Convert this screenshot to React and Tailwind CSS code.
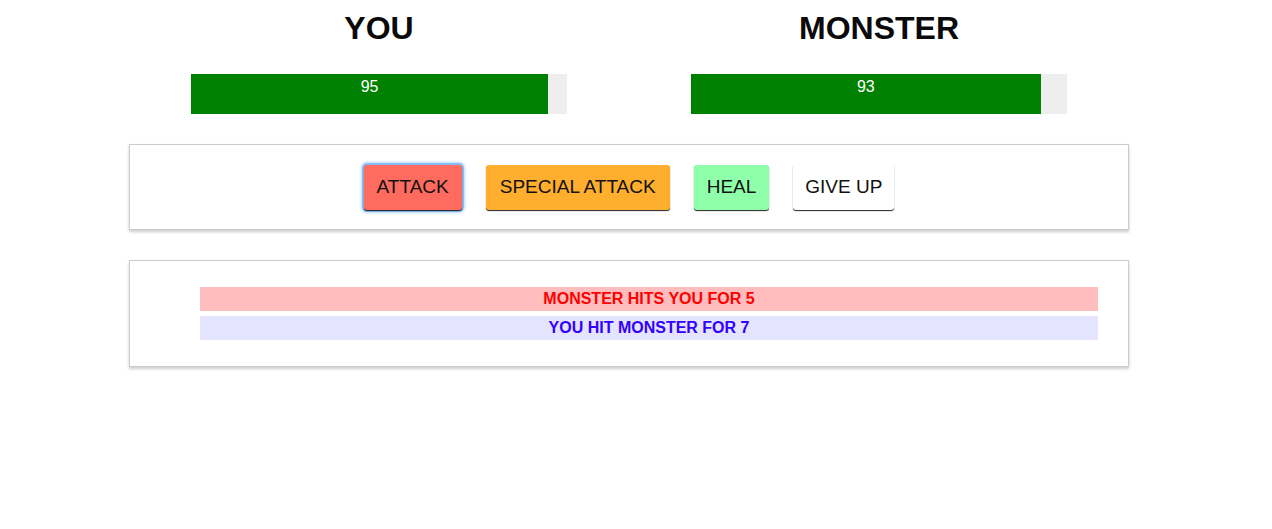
import { useState } from "react";

const font = { fontFamily: '"Liberation Sans", Arial, Helvetica, sans-serif' };

function HealthPanel({ title, health }) {
  return (
    <div className="w-[500px] flex flex-col items-center">
      <h1 className="mt-[10px] text-[32px] leading-[37px] font-bold text-[#0a0a0a]">{title}</h1>
      <div className="mt-[27px] w-[376px] h-[40px] bg-[#eeeeee]">
        <div
          className="h-full bg-[#008000] text-white text-[16px] leading-[18px] pt-[4px] text-center"
          style={{ width: `${health}%` }}
        >
          {health}
        </div>
      </div>
    </div>
  );
}

export default function App() {
  const [player] = useState(95);
  const [monster] = useState(93);

  const turns = [
    { text: "MONSTER HITS YOU FOR 5", player: false },
    { text: "YOU HIT MONSTER FOR 7", player: true },
  ];

  return (
    <div className="min-h-[529px] bg-white" style={font}>
      <div className="w-[1000px] ml-[129px]">
        {/* ── Health bars ── */}
        <div className="flex">
          <HealthPanel title="YOU" health={player} />
          <HealthPanel title="MONSTER" health={monster} />
        </div>

        {/* ── Controls ── */}
        <div className="mt-[30px] border border-[#cccccc] shadow-[0_2px_3px_#cccccc] pt-5 pb-[19px] flex justify-center gap-6">
          <button className="px-[13px] h-[45px] text-[19px] text-[#111] bg-[#ff6b5e] rounded-[3px] shadow-[0_1px_1px_#222,0_0_0_2px_#86bdf6,0_0_3px_3px_#b9d9fb]">
            ATTACK
          </button>
          <button className="px-[14px] h-[45px] text-[19px] text-[#111] bg-[#ffae2e] rounded-[3px] shadow-[0_1px_1px_#222]">
            SPECIAL ATTACK
          </button>
          <button className="px-[13px] h-[45px] text-[19px] text-[#111] bg-[#8fffa9] rounded-[3px] shadow-[0_1px_1px_#222]">
            HEAL
          </button>
          <button className="px-[12px] h-[45px] text-[19px] text-[#111] bg-white rounded-[3px] shadow-[0_1px_1px_#222]">
            GIVE UP
          </button>
        </div>

        {/* ── Log ── */}
        <div className="mt-[30px] border border-[#cccccc] shadow-[0_2px_3px_#cccccc] pt-[26px] pb-[26px] pl-[70px] pr-[30px]">
          <ul className="flex flex-col gap-[5px]">
            {turns.map((turn, i) => (
              <li
                key={i}
                className={
                  turn.player
                    ? "h-[24px] leading-[24px] text-center font-bold text-[16px] text-[#3300ff] bg-[#e4e4ff]"
                    : "h-[24px] leading-[24px] text-center font-bold text-[16px] text-[#ff0000] bg-[#ffbdbe]"
                }
              >
                {turn.text}
              </li>
            ))}
          </ul>
        </div>
      </div>
    </div>
  );
}
